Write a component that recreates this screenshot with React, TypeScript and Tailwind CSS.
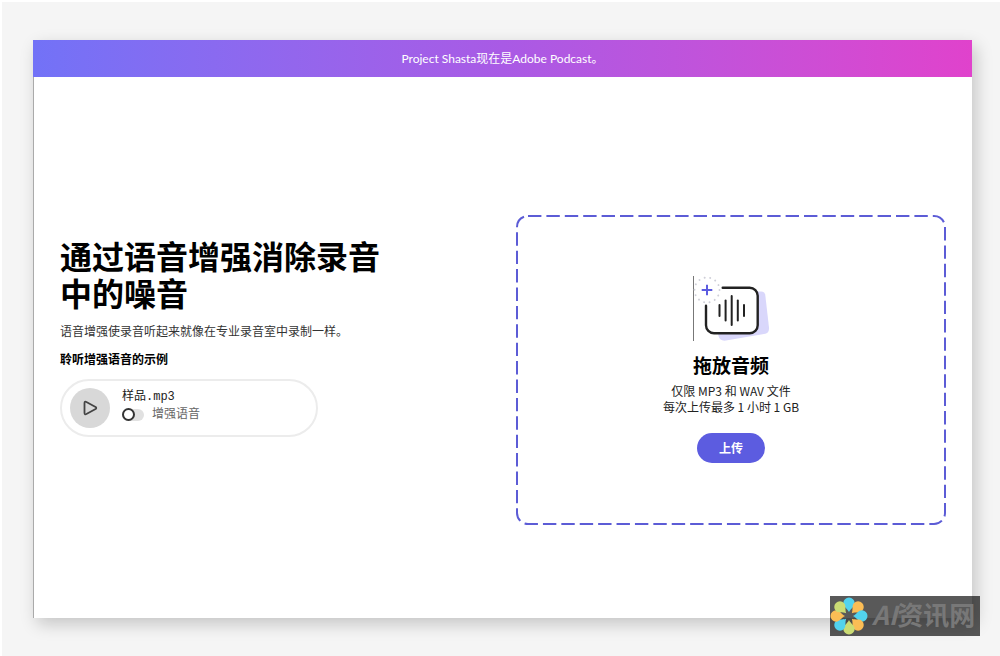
import { useState } from "react";

const petals = [
  { angle: 0, color: "#52d3ee" },
  { angle: 45, color: "#fbbd55" },
  { angle: 90, color: "#52d3ee" },
  { angle: 135, color: "#fbbd55" },
  { angle: 180, color: "#cbdc74" },
  { angle: 225, color: "#52d3ee" },
  { angle: 270, color: "#fbbd55" },
  { angle: 315, color: "#cbdc74" },
];

const bars = [
  { x: 26.5, half: 5.5 },
  { x: 32.6, half: 10 },
  { x: 38.7, half: 14.5 },
  { x: 44.8, half: 10 },
  { x: 51, half: 5.5 },
];

function AudioIcon() {
  return (
    <svg width="77" height="65" viewBox="0 0 77 65" fill="none" aria-hidden="true">
      <path
        d="M60 15.5H68Q71.7 15.5 72.2 18.500L76 51.500Q76.500 57 71 58L33 64.500Q27 65.500 25.500 60L24 50Z"
        fill="#d9d7fb"
      />
      <rect x="13" y="11.700" width="51.700" height="45.600" rx="8" fill="white" />
      <circle cx="14" cy="14" r="13" fill="white" />
      <path d="M0.500 0V65" stroke="#777777" />
      <circle
        cx="14"
        cy="14"
        r="12.500"
        stroke="#cfcfd8"
        strokeWidth="1.900"
        strokeLinecap="round"
        strokeDasharray="0.100 5.510"
      />
      <path d="M14 8.700V19.300M8.700 14H19.300" stroke="#5c5ce0" strokeWidth="2" />
      <path
        d="M29.700 11.700H56.700A8 8 0 0 1 64.700 19.700V49.300A8 8 0 0 1 56.700 57.300H21A8 8 0 0 1 13 49.300V29.700"
        stroke="#222222"
        strokeWidth="2.400"
        strokeLinecap="round"
      />
      {bars.map((bar) => (
        <path
          key={bar.x}
          d={`M${bar.x} ${34.5 - bar.half}V${34.5 + bar.half}`}
          stroke="#222222"
          strokeWidth="2"
          strokeLinecap="round"
        />
      ))}
    </svg>
  );
}

function SamplePlayer() {
  const [enhanced, setEnhanced] = useState(false);

  return (
    <div className="mt-[10px] flex h-[58px] w-[258px] items-center gap-3 rounded-full border-2 border-[#ececec] px-2">
      <button
        aria-label="播放"
        className="flex size-10 items-center justify-center rounded-full bg-[#d8d8d8]"
      >
        <svg width="16" height="16" viewBox="0 0 16 16" fill="none">
          <path
            d="M2.500 3.200V12.800Q2.500 14.900 4.400 14L13.600 9Q14.900 8 13.600 7L4.400 2Q2.500 1.100 2.500 3.200Z"
            stroke="#444444"
            strokeWidth="1.800"
            strokeLinejoin="round"
          />
        </svg>
      </button>
      <div className="pb-1 font-['Liberation_Mono','Noto_Sans_CJK_SC',monospace] text-xs">
        <p className="leading-[18px] text-[#222222]">样品.mp3</p>
        <label className="flex h-[18px] items-center gap-2 text-[#666666]">
          <input
            type="checkbox"
            checked={enhanced}
            onChange={() => setEnhanced(!enhanced)}
            className="flex h-3 w-[22px] appearance-none items-center rounded-full bg-[#e1e1e1] before:size-[13px] before:shrink-0 before:rounded-full before:border-2 before:border-[#333333] before:bg-white checked:justify-end checked:bg-[#5c5ce0]"
          />
          增强语音
        </label>
      </div>
    </div>
  );
}

function DropZone() {
  return (
    <section className="relative flex h-[310px] flex-col items-center justify-center text-center">
      <svg className="pointer-events-none absolute inset-0 size-full" fill="none" aria-hidden="true">
        <rect
          x="1"
          y="1"
          rx="11"
          className="h-[calc(100%-2px)] w-[calc(100%-2px)]"
          stroke="#5c5cd6"
          strokeWidth="2"
          strokeDasharray="13.400 5"
        />
      </svg>
      <AudioIcon />
      <h2 className="mt-[10px] text-[19px] leading-7 font-bold text-black">拖放音频</h2>
      <p className="mt-1 text-xs leading-4 text-[#222222]">
        仅限 MP3 和 WAV 文件
        <br />
        每次上传最多 1 小时 1 GB
      </p>
      <button className="mt-[18px] h-[30px] rounded-full bg-[#5c5ce0] px-[22px] text-xs font-bold text-white">
        上传
      </button>
    </section>
  );
}

function Watermark() {
  return (
    <div className="absolute right-5 bottom-5 flex h-10 w-[150px] items-center gap-1 bg-black/65">
      <svg width="38" height="38" viewBox="-19 -19 38 38" aria-hidden="true">
        {petals.map((petal) => (
          <path
            key={petal.angle}
            d="M0 -4C-2 -8 -5.700 -9.500 -5.700 -12.800A5.700 5.700 0 0 1 5.700 -12.800C5.700 -9.500 2 -8 0 -4Z"
            fill={petal.color}
            transform={`rotate(${petal.angle})`}
          />
        ))}
      </svg>
      <span className="pb-1 text-[26px] leading-9 font-bold whitespace-nowrap text-[#787878]">
        <i>AI</i>资讯网
      </span>
    </div>
  );
}

export default function App() {
  return (
    <div className="relative flex min-h-screen flex-col border-t-2 border-l-2 border-white bg-[#f5f5f5] pt-[38px] pr-[28px] pb-[38px] pl-[31px] font-['Noto_Sans_CJK_SC',sans-serif]">
      <div className="flex flex-1 flex-col bg-white shadow-[4px_6px_16px_rgba(0,0,0,0.2)]">
        <header className="flex h-[37px] items-center justify-center bg-linear-to-r from-[#7272f7] via-[#a95ae5] to-[#e042cc] font-['Lato','Noto_Sans_CJK_SC',sans-serif] text-xs text-white">
          Project Shasta现在是Adobe Podcast。
        </header>
        <main className="grid flex-1 grid-cols-2 items-center gap-[26px] border-l border-[#aaaaaa] pt-11 pr-[26px] pl-[26px]">
          <section className="pb-[66px]">
            <h1 className="max-w-[330px] text-[32px] leading-[37px] font-bold text-black">
              通过语音增强消除录音中的噪音
            </h1>
            <p className="mt-[10px] text-xs leading-5 text-[#333333]">
              语音增强使录音听起来就像在专业录音室中录制一样。
            </p>
            <h2 className="mt-2 text-xs leading-5 font-bold text-black">聆听增强语音的示例</h2>
            <SamplePlayer />
          </section>
          <DropZone />
        </main>
      </div>
      <Watermark />
    </div>
  );
}
